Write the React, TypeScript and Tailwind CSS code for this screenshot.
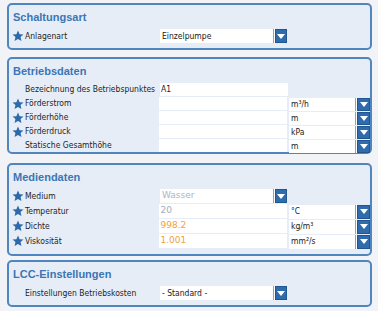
import React from "react";

const font = { fontFamily: '"Liberation Sans", Arial, sans-serif' };
const labelFont = { fontFamily: '"DejaVu Sans Condensed", "Liberation Sans", Arial, sans-serif' };

function Star() {
  return (
    <svg width="12" height="12" viewBox="0 0 24 24" className="shrink-0">
      <path
        d="M12 1l3.2 7.3 7.8.7-5.9 5.2 1.8 7.7L12 17.8 5.1 21.9l1.8-7.7L1 9l7.8-.7z"
        fill="#2d6aab"
      />
    </svg>
  );
}

function DropButton({ wide }: { wide?: boolean }) {
  return (
    <div className="flex h-full items-stretch">
      <div className="w-[1px] bg-[#8da4c2]" />
      <div className="w-[1px] bg-white" />
      <div
        className={`flex items-center justify-center border border-[#20558f] bg-[#2f6cad] ${wide ? "w-[13px]" : "w-[12px]"}`}
      >
        <svg width="8" height="5" viewBox="0 0 8 5">
          <path d="M0 0h8L4 5z" fill="#ffffff" />
        </svg>
      </div>
    </div>
  );
}

function Select({ value, muted }: { value: string; muted?: boolean }) {
  return (
    <div className="flex h-[14px] w-[127px]">
      <div
        className={`flex w-[113px] items-center bg-white px-[2px] ${muted ? "text-[9px] text-[#a7b6ca]" : "text-[8.5px] text-[#1a1a1a]"}`}
        style={muted ? { fontFamily: '"DejaVu Sans", Verdana, sans-serif' } : labelFont}
      >
        {value}
      </div>
      <DropButton />
    </div>
  );
}

function Unit({ value }: { value: React.ReactNode }) {
  return (
    <div className="ml-[2px] mt-[1px] flex h-full w-[81px]">
      <div className="flex w-[66px] items-center bg-white px-[2px] text-[8.5px] text-[#1a1a1a]" style={labelFont}>
        {value}
      </div>
      <DropButton wide />
    </div>
  );
}

function Field({ value, color }: { value?: string; color?: string }) {
  return (
    <div
      className={`flex h-full w-[128px] items-center bg-white px-[1px] ${color ? `text-[9px] ${color}` : "text-[8.5px] text-[#1a1a1a]"}`}
      style={color ? { fontFamily: '"DejaVu Sans", Verdana, sans-serif' } : labelFont}
    >
      {value}
    </div>
  );
}

function Row({ star, label, h = "h-[14px]", children }: { star?: boolean; label: string; h?: string; children: React.ReactNode }) {
  return (
    <div className={`flex items-center pl-[3px] ${h}`}>
      <div className="flex w-[13px] items-center">{star && <Star />}</div>
      <div className="w-[135px] whitespace-nowrap text-[8.5px] leading-none text-[#1e1e1e]" style={labelFont}>
        {label}
      </div>
      {children}
    </div>
  );
}

function Panel({ title, children, cls }: { title: string; children: React.ReactNode; cls: string }) {
  return (
    <div className={`rounded-[5px] border-2 border-[#4f86bf] bg-[#e7edf6] pt-[6px] ${cls}`}>
      <div className="mb-[5px] h-[13px] pl-[4px] text-[11px] font-bold leading-[13px] text-[#3a76b5]">
        {title}
      </div>
      <div className="flex flex-col gap-[1px]">{children}</div>
    </div>
  );
}

export default function App() {
  return (
    <div className="flex h-[311px] w-[378px] flex-col bg-[#f1f3f6] pl-[7px] pr-[6px] pt-[3px]" style={font}>
      <Panel title="Schaltungsart" cls="pb-[5px]">
        <Row star label="Anlagenart">
          <Select value="Einzelpumpe" />
        </Row>
      </Panel>

      <Panel title="Betriebsdaten" cls="mt-[7px] pb-[0px]">
        <Row label="Bezeichnung des Betriebspunktes" h="h-[13px]">
          <Field value="A1" />
        </Row>
        <Row star label="Förderstrom" h="h-[13px]">
          <Field />
          <Unit value="m³/h" />
        </Row>
        <Row star label="Förderhöhe" h="h-[13px]">
          <Field />
          <Unit value="m" />
        </Row>
        <Row star label="Förderdruck" h="h-[13px]">
          <Field />
          <Unit value="kPa" />
        </Row>
        <Row label="Statische Gesamthöhe" h="h-[13px]">
          <Field />
          <Unit value="m" />
        </Row>
      </Panel>

      <Panel title="Mediendaten" cls="mt-[9px] pb-[6px]">
        <Row star label="Medium">
          <Select value="Wasser" muted />
        </Row>
        <Row star label="Temperatur">
          <Field value="20" color="text-[#9eacc0]" />
          <Unit value="°C" />
        </Row>
        <Row star label="Dichte">
          <Field value="998.2" color="text-[#f0a236]" />
          <Unit value="kg/m³" />
        </Row>
        <Row star label="Viskosität">
          <Field value="1.001" color="text-[#f0a236]" />
          <Unit value="mm²/s" />
        </Row>
      </Panel>

      <Panel title="LCC-Einstellungen" cls="mt-[4px] pb-[5px]">
        <Row label="Einstellungen Betriebskosten">
          <Select value="- Standard -" />
        </Row>
      </Panel>
    </div>
  );
}
